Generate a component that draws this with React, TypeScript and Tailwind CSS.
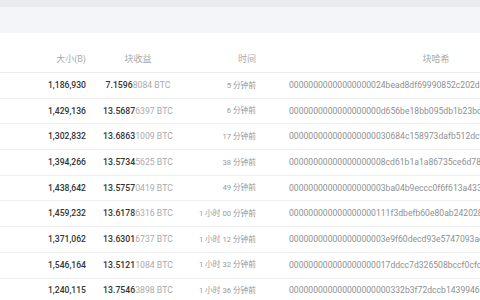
const rows = [
  { size: '1,186,930', reward: ['7.1596', '8084'], time: '5 分钟前', hash: '00000000000000000024bead8df69990852c202db3e1f07a9c4d5e6f71a2b3c4' },
  { size: '1,429,136', reward: ['13.5687', '6397'], time: '6 分钟前', hash: '0000000000000000000d656be18bb095db1b23bd79e4a1c0f2d3b5a6e7c8d9f0' },
  { size: '1,302,832', reward: ['13.6863', '1009'], time: '17 分钟前', hash: '000000000000000000030684c158973dafb512dc91b7e2a4c6d8f0a1b3c5e7d9' },
  { size: '1,394,266', reward: ['13.5734', '5625'], time: '38 分钟前', hash: '00000000000000000008cd61b1a1a86735ce6d78eb2f4a6c8e0b1d3f5a7c9e1b' },
  { size: '1,438,642', reward: ['13.5757', '0419'], time: '49 分钟前', hash: '00000000000000000003ba04b9eccc0f6f613a4334d2c1b0a9f8e7d6c5b4a392' },
  { size: '1,459,232', reward: ['13.6178', '6316'], time: '1 小时 00 分钟前', hash: '000000000000000000111f3dbefb60e80ab24202851c3e5a7b9d1f2e4c6a8b0d' },
  { size: '1,371,062', reward: ['13.6301', '6737'], time: '1 小时 12 分钟前', hash: '00000000000000000003e9f60decd93e5747093ae71b2c3d4e5f6a7b8c9d0e1f' },
  { size: '1,546,164', reward: ['13.5121', '1084'], time: '1 小时 32 分钟前', hash: '000000000000000000017ddcc7d326508bccf0cfc72a4b6c8d0e2f4a6b8c0d2e' },
  { size: '1,240,115', reward: ['13.7546', '3898'], time: '1 小时 36 分钟前', hash: '000000000000000000000332b3f72dccb14399460172a3b4c5d6e7f8091a2b3c' },
];

export default function App() {
  return (
    <div
      className="w-[480px] h-[300px] overflow-hidden bg-white"
      style={{ fontFamily: "Roboto, 'Noto Sans CJK SC', sans-serif" }}
    >
      {/* top bars */}
      <div className="h-[7px] bg-[#e9ebef]" />
      <div className="h-[26px] bg-[#f4f5f8]" />

      <div className="pt-[14px] w-[600px]">
        {/* header */}
        <div className="flex items-center h-[26px] border-b border-[#ececec] text-[9px] text-[#aaaaaa]">
          <div className="w-[86px] text-right">大小(B)</div>
          <div className="w-[104px] text-center">块收益</div>
          <div className="w-[66px] text-right">时间</div>
          <div className="w-[294px] ml-[33px] text-center">块哈希</div>
        </div>

        {rows.map((r) => (
          <div key={r.hash} className="flex items-center h-[25.7px] border-b border-[#eeeeee]">
            <div className="w-[86px] text-right text-[8.6px] font-medium text-[#333333]">{r.size}</div>
            <div className="w-[104px] text-center text-[8.7px] text-[#aaaaaa]">
              <span className="font-medium text-[#333333]">{r.reward[0]}</span>
              {r.reward[1]} BTC
            </div>
            <div className="w-[66px] text-right text-[7.7px] text-[#999999] whitespace-nowrap">{r.time}</div>
            <div className="w-[294px] ml-[33px] text-[8.6px] text-[#8f8f8f] whitespace-nowrap">{r.hash}</div>
          </div>
        ))}
      </div>
    </div>
  );
}
